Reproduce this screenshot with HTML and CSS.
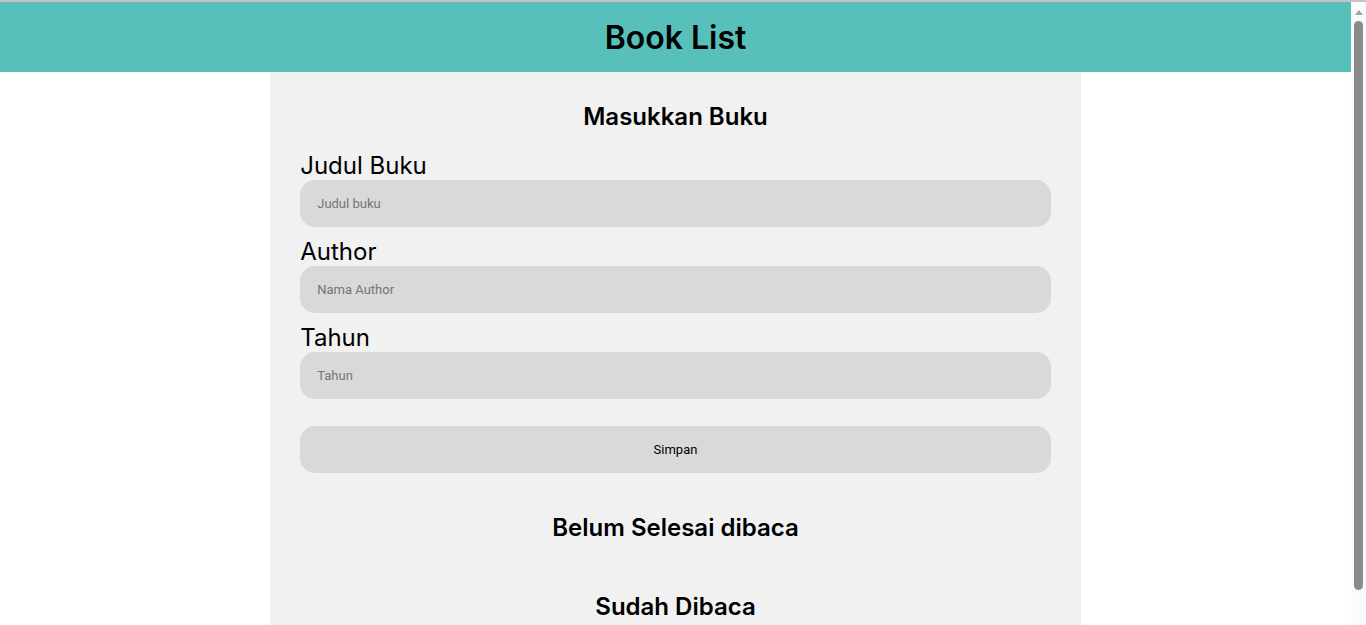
FILE: index.html
```html
<!DOCTYPE html>
<html lang="id">
<head>
<meta charset="utf-8">
<title>Book List</title>
<link rel="stylesheet" href="styles.css">
</head>
<body>
<div class="page">
  <header class="app-header">
    <h1 class="app-title">Book List</h1>
  </header>
  <main class="app-main">
    <section class="input-section">
      <h2 class="section-title">Masukkan Buku</h2>
      <form class="book-form">
        <label class="field-label" for="title">Judul Buku</label>
        <input class="field-input" id="title" type="text" placeholder="Judul buku">
        <label class="field-label" for="author">Author</label>
        <input class="field-input" id="author" type="text" placeholder="Nama Author">
        <label class="field-label" for="year">Tahun</label>
        <input class="field-input" id="year" type="number" placeholder="Tahun">
        <button class="submit-button" type="submit">Simpan</button>
      </form>
    </section>
    <section class="shelf shelf-first">
      <h2 class="section-title">Belum Selesai dibaca</h2>
      <div class="book-list"></div>
    </section>
    <section class="shelf">
      <h2 class="section-title">Sudah Dibaca</h2>
      <div class="book-list"></div>
    </section>
  </main>
</div>
<div class="scrollbar" aria-hidden="true">
  <div class="scrollbar-arrow"></div>
  <div class="scrollbar-thumb"></div>
</div>
</body>
</html>
```
FILE: styles.css
```css
* {
  box-sizing: border-box;
}

html, body {
  margin: 0;
  padding: 0;
}

html {
  overflow: hidden;
}

body {
  font-family: Inter, "Noto Sans", sans-serif;
  color: #000;
  background: #fff;
  border-top: 2px solid #c3c3c3;
}

.page {
  margin-right: 15px;
}

.app-header {
  background: #57c0bb;
  height: 70px;
  display: flex;
  align-items: center;
  justify-content: center;
}

.app-title {
  margin: 0;
  font-size: 32px;
  font-weight: 600;
}

.app-main {
  width: 60%;
  margin: 0 auto;
  background: #f1f1f1;
  padding: 30px 30px 30px;
}

.section-title {
  margin: 0;
  font-size: 24px;
  font-weight: 600;
  line-height: 29px;
  text-align: center;
}

.input-section .section-title {
  margin-bottom: 20px;
}

.book-form {
  display: flex;
  flex-direction: column;
}

.field-label {
  display: block;
  font-size: 24px;
  font-weight: 400;
  line-height: 29px;
}

.field-input {
  height: 47px;
  border: none;
  border-radius: 15px;
  background: #d9d9d9;
  padding: 0 17px;
  font-family: Roboto, Arial, sans-serif;
  font-size: 13px;
  color: #000;
  margin-bottom: 10px;
  outline: none;
  -moz-appearance: textfield;
}

.field-input::placeholder {
  color: #757575;
}

.field-input::-webkit-outer-spin-button,
.field-input::-webkit-inner-spin-button {
  -webkit-appearance: none;
  margin: 0;
}

.submit-button {
  margin-top: 17px;
  height: 47px;
  border: none;
  border-radius: 15px;
  background: #d9d9d9;
  font-family: Roboto, Arial, sans-serif;
  font-size: 13px;
  color: #000;
}

.shelf-first {
  margin-top: 40px;
}

.shelf + .shelf {
  margin-top: 50px;
}

/* stand-in for the browser's vertical scrollbar */
.scrollbar {
  position: fixed;
  top: 0;
  right: 0;
  width: 15px;
  height: 100%;
  background: #fbfbfb;
  border-top: 2px solid #c3c3c3;
}

.scrollbar-arrow {
  position: absolute;
  top: 8px;
  left: 3.5px;
  width: 0;
  height: 0;
  border-left: 4px solid transparent;
  border-right: 4px solid transparent;
  border-bottom: 5px solid #a3a3a3;
}

.scrollbar-thumb {
  position: absolute;
  top: 19px;
  left: 3px;
  width: 9px;
  height: 569px;
  border-radius: 5px;
  background: #8b8b8b;
}
```
